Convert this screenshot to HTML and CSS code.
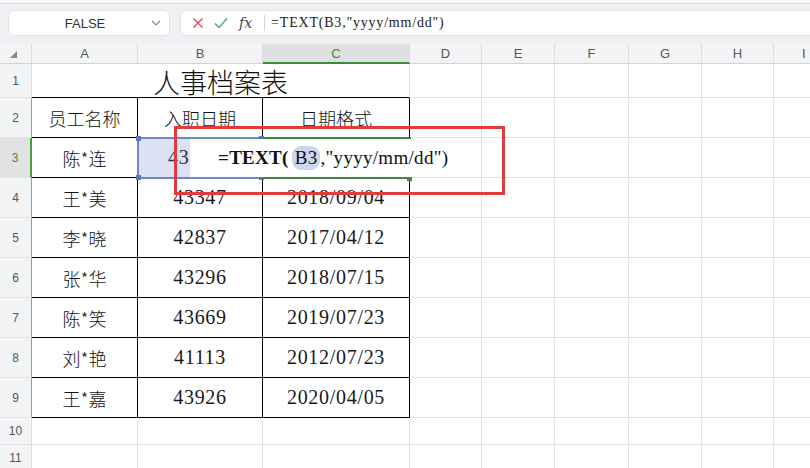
FILE: index.html
```html
<!DOCTYPE html>
<html lang="zh-CN">

<head>
    <meta charset="UTF-8">
    <meta name="viewport" content="width=device-width, initial-scale=1.0">
    <title>人事档案表</title>
    <link rel="stylesheet" href="styles.css">
</head>

<body>
    <div class="top-strip"></div>
    <div class="toolbar">
        <div class="name-box">
            <span class="name-text">FALSE</span>
            <svg class="chevron" width="10" height="6" viewBox="0 0 10 6"><path d="M1 1l4 4 4-4" fill="none" stroke="#888" stroke-width="1.1"/></svg>
        </div>
        <div class="formula-bar">
            <svg class="ico" width="12" height="12" viewBox="0 0 12 12"><path d="M1.5 1.5l9 9M10.5 1.5l-9 9" stroke="#e0485e" stroke-width="1.4"/></svg>
            <svg class="ico" width="14" height="12" viewBox="0 0 14 12"><path d="M1 6.5l4 4L13 1.5" fill="none" stroke="#4aa58a" stroke-width="1.4"/></svg>
            <span class="fx">fx</span>
            <span class="sep"></span>
            <span class="formula-text">=TEXT(B3,"yyyy/mm/dd")</span>
        </div>
    </div>

    <div class="sheet">
        <div class="grid">
            <!-- header row -->
            <div class="corner"><svg width="7" height="7" viewBox="0 0 7 7"><path d="M7 0v7H0z" fill="#888"/></svg></div>
            <div class="ch">A</div>
            <div class="ch">B</div>
            <div class="ch active">C</div>
            <div class="ch">D</div>
            <div class="ch">E</div>
            <div class="ch">F</div>
            <div class="ch">G</div>
            <div class="ch">H</div>
            <div class="ch last">I</div>

            <!-- row 1 -->
            <div class="rh">1</div>
            <div class="cell title">人事档案表</div>
            <div class="cell"></div><div class="cell"></div><div class="cell"></div><div class="cell"></div><div class="cell"></div><div class="cell"></div>

            <!-- row 2 -->
            <div class="rh edge">2</div>
            <div class="cell t zh">员工名称</div>
            <div class="cell t zh">入职日期</div>
            <div class="cell t zh">日期格式</div>
            <div class="cell"></div><div class="cell"></div><div class="cell"></div><div class="cell"></div><div class="cell"></div><div class="cell"></div>

            <!-- row 3 -->
            <div class="rh sel">3</div>
            <div class="cell t zh">陈*连</div>
            <div class="cell t num ref">43</div>
            <div class="cell t"></div>
            <div class="cell"></div><div class="cell"></div><div class="cell"></div><div class="cell"></div><div class="cell"></div><div class="cell"></div>

            <!-- row 4 -->
            <div class="rh edge">4</div>
            <div class="cell t zh">王*美</div>
            <div class="cell t num">43347</div>
            <div class="cell t num">2018/09/04</div>
            <div class="cell"></div><div class="cell"></div><div class="cell"></div><div class="cell"></div><div class="cell"></div><div class="cell"></div>

            <!-- row 5 -->
            <div class="rh edge">5</div>
            <div class="cell t zh">李*晓</div>
            <div class="cell t num">42837</div>
            <div class="cell t num">2017/04/12</div>
            <div class="cell"></div><div class="cell"></div><div class="cell"></div><div class="cell"></div><div class="cell"></div><div class="cell"></div>

            <!-- row 6 -->
            <div class="rh edge">6</div>
            <div class="cell t zh">张*华</div>
            <div class="cell t num">43296</div>
            <div class="cell t num">2018/07/15</div>
            <div class="cell"></div><div class="cell"></div><div class="cell"></div><div class="cell"></div><div class="cell"></div><div class="cell"></div>

            <!-- row 7 -->
            <div class="rh edge">7</div>
            <div class="cell t zh">陈*笑</div>
            <div class="cell t num">43669</div>
            <div class="cell t num">2019/07/23</div>
            <div class="cell"></div><div class="cell"></div><div class="cell"></div><div class="cell"></div><div class="cell"></div><div class="cell"></div>

            <!-- row 8 -->
            <div class="rh edge">8</div>
            <div class="cell t zh">刘*艳</div>
            <div class="cell t num">41113</div>
            <div class="cell t num">2012/07/23</div>
            <div class="cell"></div><div class="cell"></div><div class="cell"></div><div class="cell"></div><div class="cell"></div><div class="cell"></div>

            <!-- row 9 -->
            <div class="rh edge">9</div>
            <div class="cell t zh">王*嘉</div>
            <div class="cell t num">43926</div>
            <div class="cell t num">2020/04/05</div>
            <div class="cell"></div><div class="cell"></div><div class="cell"></div><div class="cell"></div><div class="cell"></div><div class="cell"></div>

            <!-- row 10 -->
            <div class="rh">10</div>
            <div class="cell"></div><div class="cell"></div><div class="cell"></div><div class="cell"></div><div class="cell"></div><div class="cell"></div><div class="cell"></div><div class="cell"></div><div class="cell"></div>

            <!-- row 11 -->
            <div class="rh">11</div>
            <div class="cell"></div><div class="cell"></div><div class="cell"></div><div class="cell"></div><div class="cell"></div><div class="cell"></div><div class="cell"></div><div class="cell"></div><div class="cell"></div>
        </div>

        <!-- 引用单元格 B3 的蓝框 -->
        <div class="ref-box">
            <span class="knob k1"></span><span class="knob k2"></span>
            <span class="knob k3"></span><span class="knob k4"></span>
        </div>
        <!-- 当前单元格 C3 -->
        <div class="active-box"><span class="knob-g"></span></div>
        <!-- 编辑框 -->
        <div class="editor"><b>=TEXT(</b><span class="ref-tag">B3</span>,"yyyy/mm/dd")</div>
        <!-- 红色标注框 -->
        <div class="mark"></div>
    </div>
</body>

</html>
```

FILE: styles.css
```css
body {
    margin: 0;
    background: #eef0f3;
    font-family: "Liberation Sans", "Noto Sans CJK SC", sans-serif;
    overflow: hidden;
    width: 810px;
    height: 468px;
}

.top-strip {
    height: 3px;
    background: #f8f8f9;
    border-bottom: 1px solid #d9dbde;
}

.toolbar {
    display: flex;
    gap: 10px;
    padding: 6px 0 8px 8px;
}

.name-box {
    box-sizing: border-box;
    width: 162px;
    height: 26px;
    background: #fff;
    border: 1px solid #e2e4e7;
    border-radius: 6px;
    display: flex;
    align-items: center;
    padding: 0 8px 0 0;
}

.name-text {
    flex: 1;
    text-align: center;
    font-size: 13px;
    color: #333;
    padding-left: 10px;
}

.formula-bar {
    box-sizing: border-box;
    flex: 1;
    height: 26px;
    background: #fff;
    border: 1px solid #e2e4e7;
    border-right: none;
    border-radius: 6px 0 0 6px;
    display: flex;
    align-items: center;
    padding-left: 11px;
    gap: 10px;
}

.fx {
    font-family: "DejaVu Serif", serif;
    font-style: italic;
    font-size: 14px;
    color: #444;
    margin-left: 1px;
}

.sep {
    width: 1px;
    height: 16px;
    background: #d6d6d6;
    margin-left: 2px;
    margin-right: -4px;
}

.formula-text {
    font-family: "Liberation Serif", serif;
    font-size: 14px;
    letter-spacing: 0.8px;
    color: #222;
}

.sheet {
    position: relative;
    background: #fff;
}

.grid {
    display: grid;
    grid-template-columns: 32px 106px 125px 147px 72px 73px 74px 73px 72px 73px;
    grid-template-rows: 20px 34px repeat(8, 40px) 27px 27px;
}

.grid > div {
    box-sizing: border-box;
}

.corner,
.ch {
    background: #f3f4f5;
    border-right: 1px solid #dcdcdc;
    border-bottom: 1px solid #d2d2d2;
    font-size: 13px;
    color: #555;
    display: flex;
    align-items: center;
    justify-content: center;
}

.ch.last {
    justify-content: flex-start;
    padding-left: 28px;
}

.corner {
    justify-content: flex-start;
    align-items: flex-end;
    padding: 0 0 5px 10px;
}

.ch.active {
    background: #dfe0e1;
    color: #3e8a3a;
    border-bottom: 2px solid #3e8a3a;
}

.rh {
    background: #f3f4f5;
    border-right: 1px solid #dcdcdc;
    border-bottom: 1px solid #e2e2e2;
    font-size: 12px;
    color: #555;
    display: flex;
    align-items: center;
    justify-content: center;
}

.rh.edge {
    border-right-color: #9a9a9a;
}

.rh.sel {
    background: #e1e2e3;
    color: #3e8a3a;
    border-right: 2px solid #4b9a3c;
}

.cell {
    border-right: 1px solid #e3e3e3;
    border-bottom: 1px solid #e3e3e3;
    display: flex;
    align-items: center;
    justify-content: center;
    color: #111;
}

.cell.t {
    border-right-color: #000;
    border-bottom-color: #000;
}

.title {
    grid-column: span 3;
    border-bottom-color: #000;
    font-family: "Noto Sans CJK SC", sans-serif;
    font-weight: 300;
    font-size: 27px;
    padding-top: 2px;
}

.zh {
    font-family: "Noto Sans CJK SC", sans-serif;
    font-weight: 300;
    font-size: 18px;
}

.num {
    font-family: "Liberation Serif", serif;
    font-size: 20px;
    letter-spacing: 0.7px;
    color: #1a1a1a;
}

.ref {
    background: #dae2f4;
    justify-content: flex-start;
    padding-left: 30px;
    color: #333;
}

.ref-box {
    position: absolute;
    left: 137px;
    top: 93px;
    width: 126px;
    height: 42px;
    box-sizing: border-box;
    border: 2px solid #6c88c9;
}

.knob {
    position: absolute;
    width: 5px;
    height: 5px;
    background: #5a78bd;
}

.k1 { left: -3px; top: -3px; }
.k2 { right: -3px; top: -3px; }
.k3 { left: -3px; bottom: -3px; }
.k4 { right: -3px; bottom: -3px; }

.active-box {
    position: absolute;
    left: 263px;
    top: 93px;
    width: 148px;
    height: 42px;
    box-sizing: border-box;
    border: 2px solid #3e8a3a;
}

.knob-g {
    position: absolute;
    right: -3px;
    bottom: -4px;
    width: 5px;
    height: 5px;
    background: #3e8a3a;
}

.editor {
    position: absolute;
    left: 190px;
    top: 95px;
    width: 272px;
    height: 38px;
    background: #fff;
    box-sizing: border-box;
    padding-left: 28px;
    display: flex;
    align-items: center;
    font-family: "Liberation Serif", serif;
    font-size: 19px;
    letter-spacing: 0.3px;
    color: #111;
}

.editor b {
    font-weight: bold;
}

.ref-tag {
    background: #cbd6ef;
    border-radius: 9px;
    padding: 1px 3px;
    margin-left: 3px;
}

.mark {
    position: absolute;
    left: 174px;
    top: 82px;
    width: 331px;
    height: 69px;
    box-sizing: border-box;
    border: 3px solid #e23b3e;
}
```
